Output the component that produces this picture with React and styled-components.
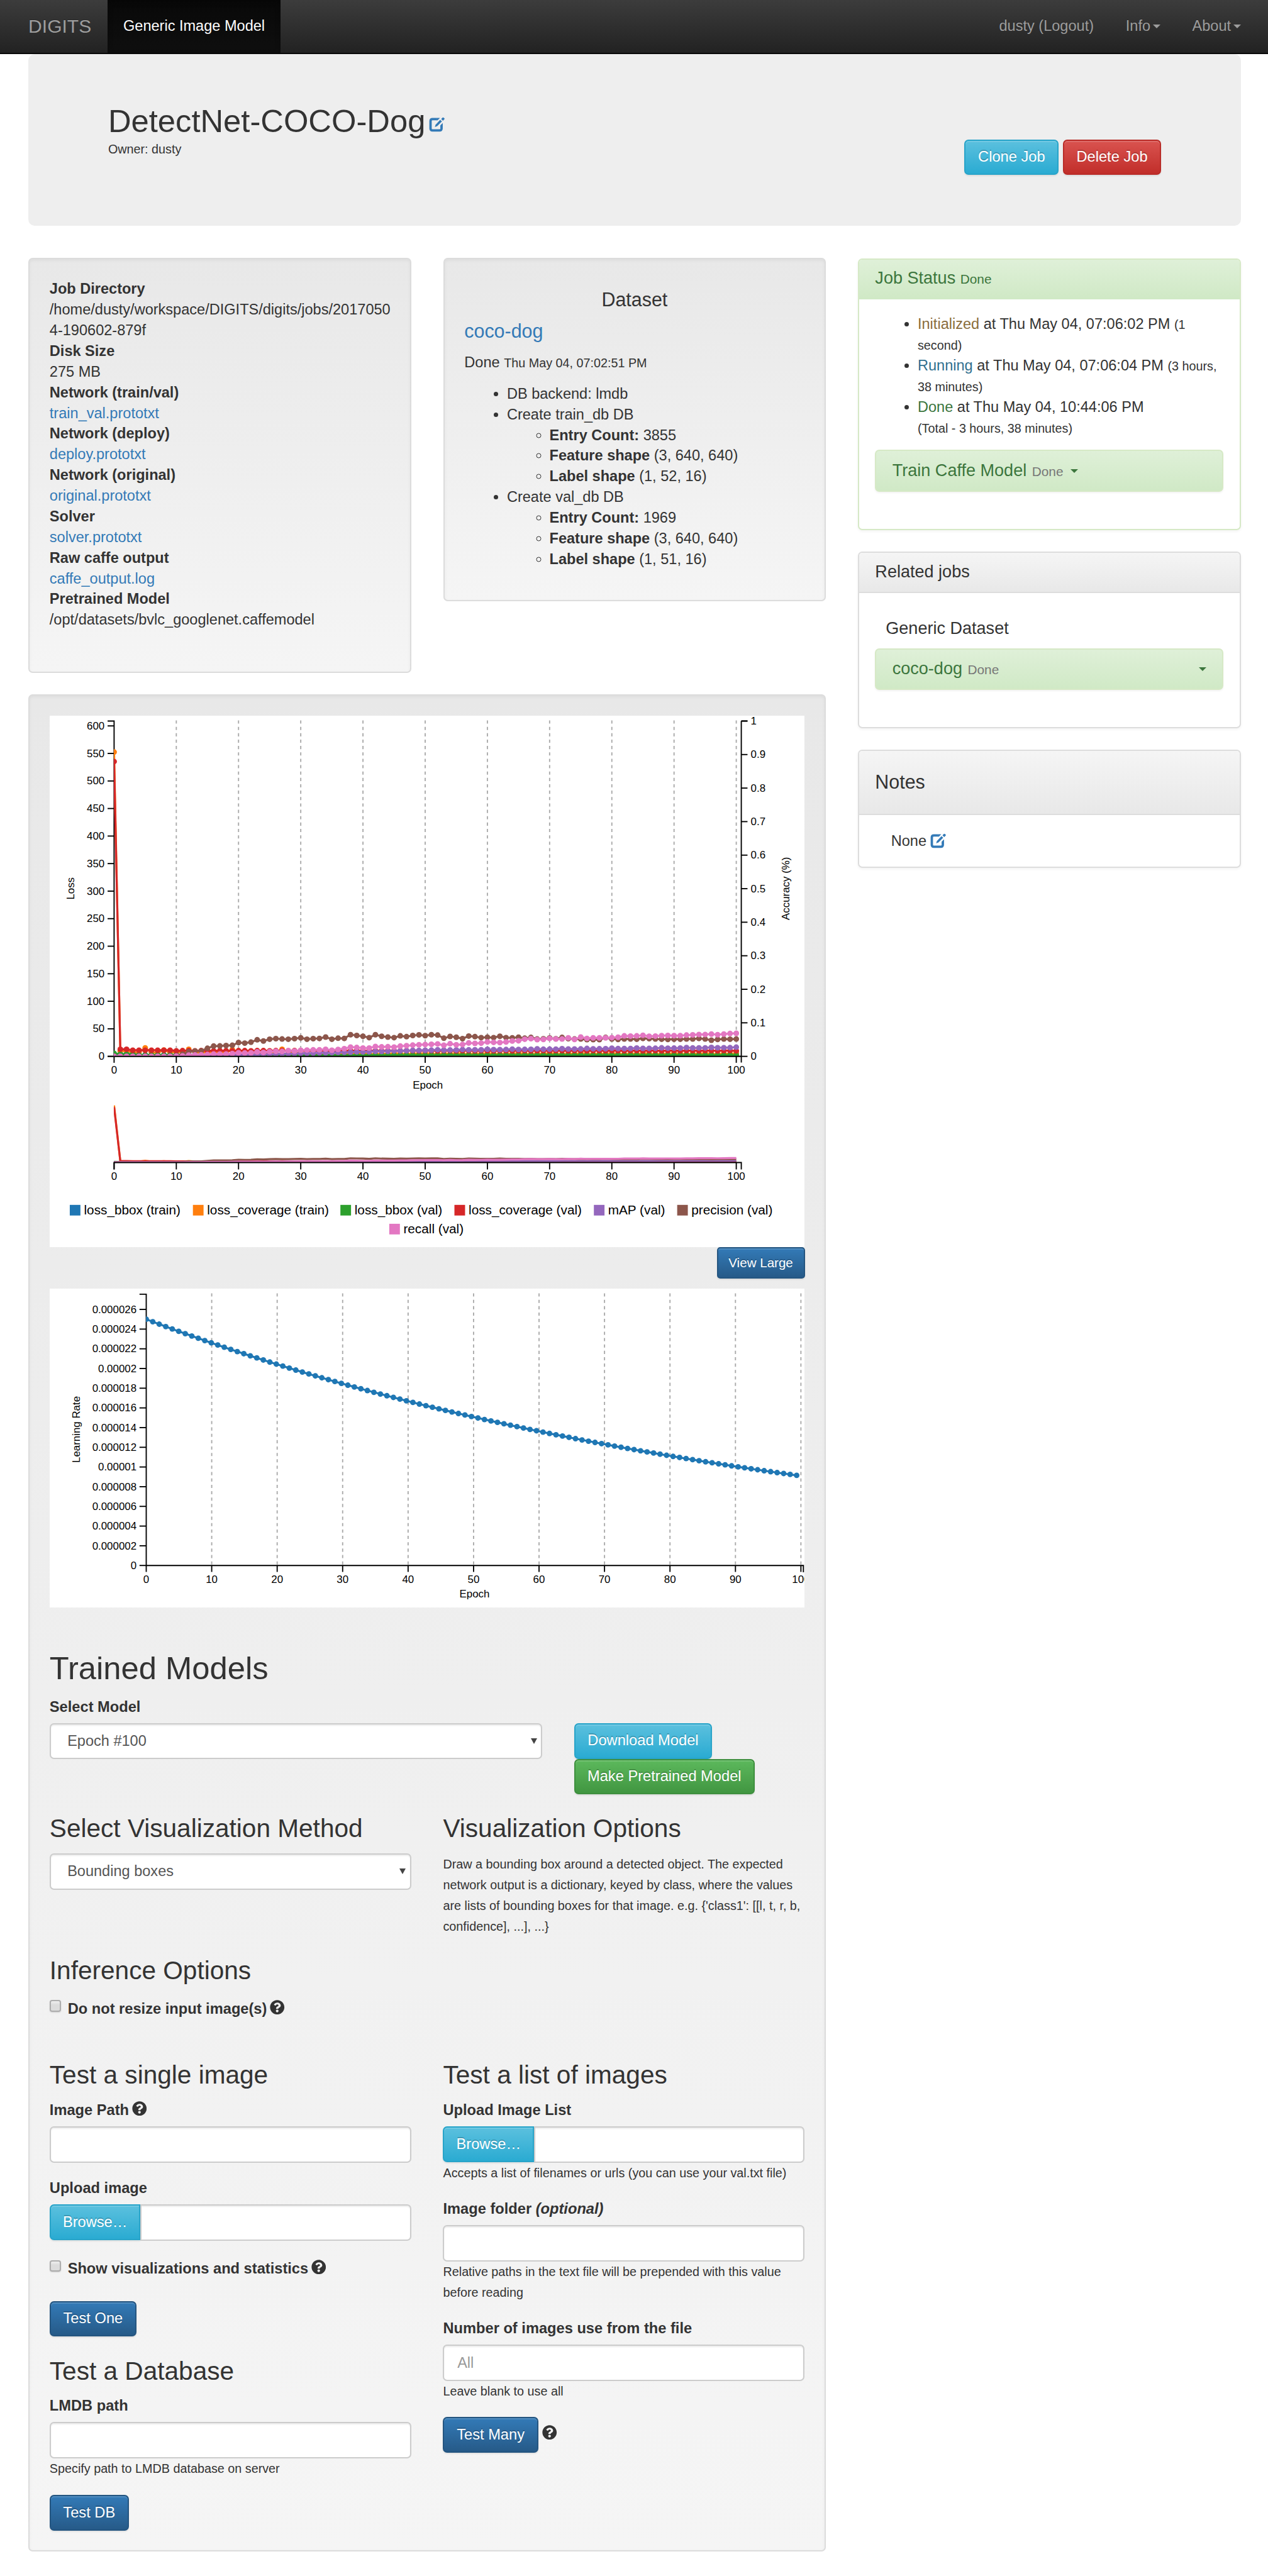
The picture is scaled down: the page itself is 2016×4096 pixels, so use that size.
import React from 'react';
import styled, { createGlobalStyle, css } from 'styled-components';
import { FaQuestionCircle } from 'react-icons/fa';

const GlobalStyle = createGlobalStyle`
  *, *::before, *::after { box-sizing: border-box; }
  html { font-size: 9.3942px; }
  body {
    margin: 0;
    background: #fff;
    color: #333;
    font-family: "Liberation Sans", Arial, sans-serif;
    font-size: 2.508rem;
    line-height: 3.5rem;
  }
  h1, h2, h3, h4, p, ul, label { margin: 0; padding: 0; font-weight: normal; }
  a { color: #337ab7; text-decoration: none; }
  b { font-weight: bold; }
`;

/* ---------- navigation ---------- */

const Navbar = styled.nav`
  display: flex;
  height: 9.2rem;
  padding: 0 4.6rem 0 4.8rem;
  border-bottom: 2px solid #080808;
  background: linear-gradient(to bottom, #3c3c3c 0%, #222 100%);
  color: #9d9d9d;
  line-height: 8.9rem;
  text-shadow: 0 -1px 0 rgba(0, 0, 0, 0.25);
  white-space: nowrap;
`;

const Brand = styled.div`
  padding-right: 2.7rem;
  font-size: 3.2rem;
`;

const ActiveTab = styled.div`
  padding: 0 2.7rem;
  color: #fff;
  background: linear-gradient(to bottom, #080808 0%, #0f0f0f 100%);
  box-shadow: inset 0 3px 9px rgba(0, 0, 0, 0.25);
`;

const NavRight = styled.div`
  display: flex;
  gap: 5.4rem;
  margin-left: auto;
`;

const NavItem = styled.div`
  display: flex;
  align-items: center;
  gap: 0.4rem;
`;

const Caret = styled.span`
  display: inline-block;
  width: 0;
  height: 0;
  vertical-align: middle;
  border-top: 0.74rem solid currentColor;
  border-left: 0.74rem solid transparent;
  border-right: 0.74rem solid transparent;
`;

/* ---------- page frame ---------- */

const Container = styled.div`
  padding: 0 4.6rem 4.1rem 4.8rem;
`;

const Jumbotron = styled.header`
  display: flex;
  justify-content: space-between;
  height: 29rem;
  padding: 8.35rem 13.5rem 0;
  border-radius: 1.08rem;
  background: #eee;
`;

const JobTitle = styled.h2`
  font-size: 5.4rem;
  line-height: 5.9rem;
`;

const Small = styled.small`
  font-size: ${(p) => p.$size || '2.105rem'};
  line-height: 1;
  color: ${(p) => p.$color || 'inherit'};
`;

const Owner = styled.div`
  margin-top: 0.1rem;
  font-size: 2.105rem;
`;

const ButtonGroup = styled.div`
  display: flex;
  gap: 0.7rem;
  margin-top: 6.04rem;
`;

const tones = {
  info: css`background: linear-gradient(to bottom, #5bc0de 0%, #2aabd2 100%); border-color: #28a4c9;`,
  danger: css`background: linear-gradient(to bottom, #d9534f 0%, #c12e2a 100%); border-color: #b92c28;`,
  success: css`background: linear-gradient(to bottom, #5cb85c 0%, #419641 100%); border-color: #3e8f3e;`,
  primary: css`background: linear-gradient(to bottom, #337ab7 0%, #265a88 100%); border-color: #245580;`,
};

const Button = styled.button`
  display: inline-flex;
  align-items: center;
  justify-content: center;
  flex: none;
  width: ${(p) => p.$w};
  height: ${(p) => p.$h || '6.03rem'};
  margin: ${(p) => p.$m || 0};
  padding: 0;
  border: 2px solid;
  border-radius: ${(p) => p.$radius || '0.72rem'};
  color: #fff;
  font: inherit;
  font-size: ${(p) => p.$size || '2.52rem'};
  line-height: 1;
  white-space: nowrap;
  text-shadow: 0 -2px 0 rgba(0, 0, 0, 0.2);
  box-shadow: inset 0 2px 0 rgba(255, 255, 255, 0.15), 0 2px 2px rgba(0, 0, 0, 0.075);
  ${(p) => tones[p.$tone]}
`;

const Columns = styled.div`
  display: grid;
  grid-template-columns: 135rem 64.8rem;
  gap: 5.4rem;
  align-items: start;
  margin-top: 5.4rem;
`;

const TwoColumns = styled.div`
  display: grid;
  grid-template-columns: ${(p) => p.$cols || '64.8rem 64.8rem'};
  gap: 5.4rem;
  align-items: start;
  margin-top: ${(p) => p.$mt || 0};
`;

const Well = styled.section`
  height: ${(p) => p.$h};
  margin-top: ${(p) => p.$mt || 0};
  padding: ${(p) => p.$pt} 3.38rem 0;
  border: 2px solid #dcdcdc;
  border-radius: 0.72rem;
  background: linear-gradient(to bottom, #e8e8e8 0%, #f5f5f5 100%);
  box-shadow: inset 0 2px 5px rgba(0, 0, 0, 0.05), 0 2px 0 rgba(255, 255, 255, 0.1);
  white-space: nowrap;
`;

const DatasetTitle = styled.h4`
  margin-bottom: 1.8rem;
  font-size: 3.24rem;
  text-align: ${(p) => (p.$center ? 'center' : 'left')};
`;

const BulletList = styled.ul`
  padding-left: 7.2rem;
  margin-top: ${(p) => p.$mt || 0};
`;

/* ---------- sidebar ---------- */

const Sidebar = styled.aside`
  display: flex;
  flex-direction: column;
  gap: 3.67rem;
  padding-top: 0.1rem;
`;

const Panel = styled.section`
  height: ${(p) => p.$h};
  border: 2px solid ${(p) => (p.$green ? '#d6e9c6' : '#ddd')};
  border-radius: 0.72rem;
  overflow: hidden;
  box-shadow: 0 2px 4px rgba(0, 0, 0, 0.05);
`;

const PanelHeading = styled.div`
  height: ${(p) => p.$h};
  padding: ${(p) => p.$pt} 2.7rem 0;
  font-size: ${(p) => p.$size || '2.88rem'};
  line-height: ${(p) => p.$lh || '3.1rem'};
  color: ${(p) => (p.$green ? '#3c763d' : '#333')};
  border-bottom: 2px solid ${(p) => (p.$green ? '#d0e9c6' : '#ddd')};
  background: ${(p) =>
    p.$green
      ? 'linear-gradient(to bottom, #dff0d8 0%, #d0e9c6 100%)'
      : 'linear-gradient(to bottom, #f5f5f5 0%, #e8e8e8 100%)'};
`;

const PanelBody = styled.div`
  padding: ${(p) => p.$pt} 2.7rem 0;
`;

const Status = styled.span`
  color: ${(p) => p.$color};
`;

const JobBar = styled.div`
  display: flex;
  align-items: baseline;
  gap: 0.9rem;
  height: 7.1rem;
  margin-top: ${(p) => p.$mt};
  padding: 1.55rem 2.7rem 0;
  border: 2px solid #d6e9c6;
  border-radius: 0.72rem;
  background: linear-gradient(to bottom, #dff0d8 0%, #d0e9c6 100%);
  box-shadow: 0 2px 3px rgba(0, 0, 0, 0.05);
  color: #3c763d;
  font-size: 2.88rem;
  white-space: nowrap;

  ${Caret} {
    align-self: flex-start;
    margin-top: 1.5rem;
    margin-left: ${(p) => (p.$spread ? 'auto' : '0.3rem')};
  }
`;

const DatasetKind = styled.h4`
  padding-left: 1.8rem;
  font-size: 2.88rem;
  line-height: 3.1rem;
`;

const NoteLine = styled.div`
  display: flex;
  align-items: center;
  gap: 0.6rem;
  padding-left: 2.7rem;
`;

/* ---------- charts ---------- */

const ChartSvg = styled.svg`
  display: block;
  width: 127.8rem;
  height: ${(p) => p.$h};
  margin-top: ${(p) => p.$mt || 0};
  background: #fff;
  overflow: hidden;
  font-family: "Liberation Sans", Arial, sans-serif;
  font-size: 18px;

  .axis { fill: none; stroke: #000; stroke-width: 2; }
  .grid { stroke: #aaa; stroke-width: 2; stroke-dasharray: 5.4 5.4; }
  .line { fill: none; stroke-width: 3.4; }
  .end { text-anchor: end; }
  .mid { text-anchor: middle; }
`;

const ChartActions = styled.div`
  display: flex;
  justify-content: flex-end;
`;

/* ---------- forms ---------- */

const Heading = styled.h3`
  margin-top: ${(p) => p.$mt};
  font-size: ${(p) => (p.$large ? '5.4rem' : '4.32rem')};
  line-height: ${(p) => (p.$large ? '5.9rem' : '4.7rem')};
`;

const Label = styled.label`
  display: flex;
  gap: 0.8rem;
  margin-top: ${(p) => p.$mt};
  margin-bottom: 1rem;
  font-size: 2.52rem;
  font-weight: bold;

  svg { width: 2.5rem; height: 2.5rem; margin: 0.24rem 0 0 -0.3rem; }
`;

const CheckLabel = styled(Label)`
  margin-bottom: 0;
`;

const Checkbox = styled.input.attrs({ type: 'checkbox' })`
  appearance: none;
  width: 1.97rem;
  height: 1.97rem;
  margin: 0.3rem 0.3rem 0 0;
  border: 2px solid #adadad;
  border-radius: 0.4rem;
  background: linear-gradient(to bottom, #efefef, #dcdcdc 40%);
  box-shadow: 0 1px 2px rgba(0, 0, 0, 0.15);
`;

const field = css`
  height: 6.12rem;
  border: 2px solid #ccc;
  border-radius: 0.72rem;
  background: #fff;
  box-shadow: inset 0 2px 2px rgba(0, 0, 0, 0.075);
`;

const Input = styled.input`
  ${field}
  display: block;
  width: 100%;
  padding: 0 2.2rem;
  font: inherit;
  color: #555;
  &::placeholder { color: #999; opacity: 1; }
`;

const SelectBox = styled.div`
  ${field}
  display: flex;
  align-items: center;
  justify-content: space-between;
  width: ${(p) => p.$w || '100%'};
  margin-top: ${(p) => p.$mt || 0};
  padding: 0 0.7rem 0 2.8rem;
  color: #555;
`;

const SelectArrow = styled.span`
  border-top: 1.05rem solid #444;
  border-left: 0.55rem solid transparent;
  border-right: 0.55rem solid transparent;
`;

const FileField = styled.div`
  display: flex;

  ${Input} {
    flex: 1;
    width: auto;
    min-width: 0;
    border-top-left-radius: 0;
    border-bottom-left-radius: 0;
  }
`;

const Help = styled.p`
  margin-top: ${(p) => p.$mt || 0};
  font-size: 2.105rem;
`;

const ModelRow = styled.div`
  display: flex;
  gap: 5.4rem;
`;

const ButtonStack = styled.div`
  display: flex;
  flex-direction: column;
`;

const SubmitRow = styled.div`
  display: flex;
  gap: 0.7rem;
  margin-top: ${(p) => p.$mt};

  svg { width: 2.5rem; height: 2.5rem; margin-top: 1.4rem; }
`;

const EditSvg = styled.svg`
  width: 2.7rem;
  height: 2.5rem;
  margin-left: ${(p) => p.$ml || 0};
`;

function EditIcon({ ml }) {
  return (
    <EditSvg $ml={ml} viewBox="110 91 81 75" fill="none" stroke="#337ab7" aria-hidden="true">
      <path d="M151 102H128Q118 102 118 112V149Q118 159 128 159H164Q174 159 174 149V137" strokeWidth="12" />
      <path d="M151 96H166L154 108H149ZM180 121V139L168 145V133Z" fill="#337ab7" stroke="none" />
      <path d="M140 142L144 130L167 105L176 113L152 137Z" fill="#337ab7" stroke="none" />
      <path d="M172 101L179 94Q181 92 184 94L189 98Q190 101 188 103L181 110Z" fill="#337ab7" stroke="none" />
    </EditSvg>
  );
}

/* ---------- chart data (heights above the axis, in thirds of a chart unit) ---------- */

const precision = [
  0, 0, 0, 0, 0, 0, 0, 0, 0, 0, 4, 11, 23, 27, 28, 41, 52, 53, 55, 56, 70, 67, 72, 84, 78, 87, 90, 88, 87, 90, 94, 87, 90, 91,
  98, 87, 92, 91, 110, 106, 102, 95, 110, 102, 98, 95, 104, 100, 106, 109, 105, 110, 108, 92, 101, 97, 90, 103, 100, 95, 97,
  95, 102, 95, 94, 97, 92, 96, 88, 89, 93, 89, 96, 90, 88, 88, 85, 85, 85, 96, 88, 86, 88, 88, 87, 91, 90, 88, 87, 86, 87, 87,
  88, 88, 91, 88, 82, 86, 88, 87, 88,
];
const recall = [
  0, 0, 0, 0, 0, 0, 0, 0, 0, 0, 1, 2, 6, 7, 8, 9, 12, 12, 12, 14, 18, 17, 18, 23, 20, 24, 26, 25, 29, 27, 31, 32, 33, 33, 36,
  31, 35, 39, 47, 45, 42, 42, 50, 48, 49, 47, 52, 54, 57, 59, 60, 61, 63, 56, 64, 59, 60, 68, 66, 67, 73, 71, 70, 73, 78, 79,
  87, 90, 85, 86, 91, 88, 88, 94, 86, 98, 91, 94, 94, 94, 95, 97, 104, 103, 104, 107, 102, 103, 105, 106, 105, 105, 108, 109,
  111, 111, 113, 110, 113, 116, 117,
];
const epochs = precision.map((_, i) => i);
const map = epochs.map((i) => {
  if (i < 12) return 0;
  if (i < 50) return (i - 12) * 0.82 + (i % 3 ? 0 : 1);
  return 31 + (i - 50) * 0.27 + (i % 4 ? 0 : 2);
});
const covVal = epochs.map((i) => (i === 0 ? 1497 : i < 3 ? 36 : i < 10 ? 31 : 29 - (i % 3 === 1 ? 1 : 0)));
const orangePeaks = { 5: 43, 8: 32, 12: 36, 19: 34, 27: 36, 35: 26 };
const covTrain = epochs.map((i) =>
  i === 0 ? 1545 : i < 3 ? 27 : orangePeaks[i] || (i < 30 ? 22 : 15) - ((i * 7) % 5)
);
const bboxVal = epochs.map((i) => (i === 0 ? 15 : i < 4 ? 10 : 6));
const bboxTrain = epochs.map((i) => (i < 4 ? 12 : 7));

const series = [
  { name: 'loss_bbox (train)', color: '#1f77b4', data: bboxTrain, lx: 118 },
  { name: 'loss_coverage (train)', color: '#ff7f0e', data: covTrain, lx: 326.4 },
  { name: 'loss_bbox (val)', color: '#2ca02c', data: bboxVal, lx: 576 },
  { name: 'loss_coverage (val)', color: '#d62728', data: covVal, lx: 769 },
  { name: 'mAP (val)', color: '#9467bd', data: map, lx: 1005 },
  { name: 'precision (val)', color: '#8c564b', data: precision, lx: 1146 },
  { name: 'recall (val)', color: '#e377c2', data: recall, lx: 658.7, row: 1 },
];

const tens = [0, 10, 20, 30, 40, 50, 60, 70, 80, 90, 100];

function LossChart() {
  const x = (e) => 193 + e * 10.53;
  const bottom = 1787.6;
  const losses = Array.from({ length: 13 }, (_, i) => i * 50);
  return (
    <ChartSvg $h="90rem" viewBox="84 1211 1278 900">
      <clipPath id="plot"><rect x="192.5" y="1215" width="1063" height="573" /></clipPath>
      {tens.slice(1).map((t) => <line key={t} className="grid" x1={x(t)} x2={x(t)} y1="1219" y2={bottom} />)}
      <path className="axis" d={`M182 1220H193V${bottom}H182`} />
      <path className="axis" d={`M193 ${bottom}H1254.5M1254.5 1798V1220M1254.5 1220H1265`} />
      {losses.map((v) => {
        const y = bottom - v * 0.9322;
        return (
          <g key={v}>
            <line className="axis" x1="182" x2="193" y1={y} y2={y} />
            <text className="end" x="176.8" y={y + 6}>{v}</text>
          </g>
        );
      })}
      {tens.map((v) => {
        const y = bottom - v * 5.676;
        return (
          <g key={v}>
            <line className="axis" x1="1254.5" x2="1265" y1={y} y2={y} />
            <text x="1270.5" y={y + 6}>{v / 100}</text>
            <line className="axis" x1={x(v)} x2={x(v)} y1={bottom} y2="1798.5" />
            <text className="mid" x={x(v)} y="1817">{v}</text>
            <line className="axis" x1={x(v)} x2={x(v)} y1="1967.3" y2="1979" />
            <text className="mid" x={x(v)} y="1996.7">{v}</text>
          </g>
        );
      })}
      <text className="mid" x="724" y="1842">Epoch</text>
      <text className="mid" transform="translate(126 1503.5) rotate(-90)">Loss</text>
      <text className="mid" transform="translate(1336 1503.5) rotate(-90)">Accuracy (%)</text>
      <g clipPath="url(#plot)">
        {series.map((s) => (
          <g key={s.name}>
            <polyline
              className="line"
              stroke={s.color}
              points={s.data.map((d, i) => `${x(i)},${bottom - d / 3}`).join(' ')}
            />
            {s.data.map((d, i) => <circle key={i} cx={x(i)} cy={bottom - d / 3} r="4.8" fill={s.color} />)}
          </g>
        ))}
      </g>
      <line className="axis" x1="193" x2="1254.5" y1={bottom} y2={bottom} />
      <clipPath id="overview"><rect x="192.5" y="1860" width="1063" height="107.5" /></clipPath>
      <g clipPath="url(#overview)">
        {series.map((s) => (
          <polyline
            key={s.name}
            className="line"
            stroke={s.color}
            points={s.data.map((d, i) => `${x(i)},${1967 - (d / 3) * 0.187}`).join(' ')}
          />
        ))}
      </g>
      <path className="axis" d="M193 1979V1967.3H1254.5V1979" />
      {series.map((s) => (
        <g key={s.name} fontSize="22.1">
          <rect x={s.lx} y={s.row ? 2071 : 2039} width="18" height="18" fill={s.color} />
          <text x={s.lx + 24} y={s.row ? 2086.7 : 2054.7}>{s.name}</text>
        </g>
      ))}
    </ChartSvg>
  );
}

const rateLabels = [
  '0', '0.000002', '0.000004', '0.000006', '0.000008', '0.00001', '0.000012',
  '0.000014', '0.000016', '0.000018', '0.00002', '0.000022', '0.000024', '0.000026',
];

function RateChart() {
  const x = (e) => 247.4 + e * 11.08;
  const bottom = 2649.6;
  const points = epochs.map((i) => [x(i * 0.9935), bottom - 25 * Math.pow(0.99, i) * 16.67]);
  return (
    <ChartSvg $h="54rem" $mt="1.7rem" viewBox="84 2181 1278 540">
      <clipPath id="rate"><rect x="247" y="2185" width="1115" height="466" /></clipPath>
      {tens.slice(1).map((t) => <line key={t} className="grid" x1={x(t)} x2={x(t)} y1="2189" y2={bottom} />)}
      <path className="axis" d={`M236 2190.5H247.4V${bottom}H1359.6V2661`} />
      {rateLabels.map((l, i) => {
        const y = bottom - i * 33.34;
        return (
          <g key={l}>
            <line className="axis" x1="236" x2="247.4" y1={y} y2={y} />
            <text className="end" x="231" y={y + 6}>{l}</text>
          </g>
        );
      })}
      {tens.map((t) => (
        <g key={t}>
          <line className="axis" x1={x(t)} x2={x(t)} y1={bottom} y2="2660.5" />
          <text className="mid" x={x(t)} y="2679">{t}</text>
        </g>
      ))}
      <text className="mid" x="803" y="2704">Epoch</text>
      <text className="mid" transform="translate(134.6 2419.4) rotate(-90)">Learning Rate</text>
      <g clipPath="url(#rate)" fill="#1f77b4">
        <polyline className="line" stroke="#1f77b4" points={points.map((p) => p.join(',')).join(' ')} />
        {points.map(([cx, cy]) => <circle key={cx} cx={cx} cy={cy} r="4.7" />)}
      </g>
    </ChartSvg>
  );
}

const files = [
  ['Network (train/val)', 'train_val.prototxt'],
  ['Network (deploy)', 'deploy.prototxt'],
  ['Network (original)', 'original.prototxt'],
  ['Solver', 'solver.prototxt'],
  ['Raw caffe output', 'caffe_output.log'],
];

function DbDetails({ name, count, label }) {
  return (
    <li>
      Create {name} DB
      <BulletList>
        <li><b>Entry Count:</b> {count}</li>
        <li><b>Feature shape</b> (3, 640, 640)</li>
        <li><b>Label shape</b> {label}</li>
      </BulletList>
    </li>
  );
}

function FilePicker() {
  return (
    <FileField>
      <Button $tone="info" $w="15.4rem" $radius="0.72rem 0 0 0.72rem">Browse…</Button>
      <Input />
    </FileField>
  );
}

export default function App() {
  return (
    <>
      <GlobalStyle />
      <Navbar>
        <Brand>DIGITS</Brand>
        <ActiveTab>Generic Image Model</ActiveTab>
        <NavRight>
          <NavItem>dusty (Logout)</NavItem>
          <NavItem>Info<Caret /></NavItem>
          <NavItem>About<Caret /></NavItem>
        </NavRight>
      </Navbar>
      <Container>
        <Jumbotron>
          <div>
            <JobTitle>DetectNet-COCO-Dog<EditIcon ml="0.6rem" /></JobTitle>
            <Owner>Owner: dusty</Owner>
          </div>
          <ButtonGroup>
            <Button $tone="info" $w="16rem">Clone Job</Button>
            <Button $tone="danger" $w="16.6rem">Delete Job</Button>
          </ButtonGroup>
        </Jumbotron>

        <Columns>
          <main>
            <TwoColumns>
              <Well $h="70.3rem" $pt="3.38rem">
                <div><b>Job Directory</b></div>
                <div>/home/dusty/workspace/DIGITS/digits/jobs/2017050<br />4-190602-879f</div>
                <div><b>Disk Size</b></div>
                <div>275 MB</div>
                {files.map(([title, file]) => (
                  <div key={file}><b>{title}</b><br /><a>{file}</a></div>
                ))}
                <div><b>Pretrained Model</b></div>
                <div>/opt/datasets/bvlc_googlenet.caffemodel</div>
              </Well>
              <Well $h="58.2rem" $pt="5.15rem">
                <DatasetTitle $center>Dataset</DatasetTitle>
                <DatasetTitle><a>coco-dog</a></DatasetTitle>
                <div>Done <Small>Thu May 04, 07:02:51 PM</Small></div>
                <BulletList $mt="1.85rem">
                  <li>DB backend: lmdb</li>
                  <DbDetails name="train_db" count="3855" label="(1, 52, 16)" />
                  <DbDetails name="val_db" count="1969" label="(1, 51, 16)" />
                </BulletList>
              </Well>
            </TwoColumns>

            <Well $h="314.4rem" $mt="3.6rem" $pt="3.38rem">
              <LossChart />
              <ChartActions>
                <Button $tone="primary" $w="14.9rem" $h="5.3rem" $size="2.19rem" $radius="0.54rem">View Large</Button>
              </ChartActions>
              <RateChart />

              <Heading $large $mt="7.38rem">Trained Models</Heading>
              <Label $mt="1.8rem">Select Model</Label>
              <ModelRow>
                <SelectBox $w="83.4rem">Epoch #100<SelectArrow /></SelectBox>
                <ButtonStack>
                  <Button $tone="info" $w="23.3rem">Download Model</Button>
                  <Button $tone="success" $w="30.5rem">Make Pretrained Model</Button>
                </ButtonStack>
              </ModelRow>

              <TwoColumns $cols="61.2rem 61.2rem" $mt="3.4rem">
                <div>
                  <Heading>Select Visualization Method</Heading>
                  <SelectBox $mt="1.9rem">Bounding boxes<SelectArrow /></SelectBox>
                </div>
                <div>
                  <Heading>Visualization Options</Heading>
                  <Help $mt="2.03rem">
                    Draw a bounding box around a detected object. The expected<br />
                    network output is a dictionary, keyed by class, where the values<br />
                    are lists of bounding boxes for that image. e.g. {"{'class1': [[l, t, r, b,"}<br />
                    {'confidence], ...], ...}'}
                  </Help>
                </div>
              </TwoColumns>

              <Heading $mt="3.35rem">Inference Options</Heading>
              <CheckLabel $mt="2.36rem"><Checkbox />Do not resize input image(s)<FaQuestionCircle /></CheckLabel>

              <TwoColumns $cols="61.2rem 61.2rem" $mt="7.12rem">
                <div>
                  <Heading>Test a single image</Heading>
                  <Label $mt="1.86rem">Image Path<FaQuestionCircle /></Label>
                  <Input />
                  <Label $mt="2.55rem">Upload image</Label>
                  <FilePicker />
                  <CheckLabel $mt="3.05rem"><Checkbox />Show visualizations and statistics<FaQuestionCircle /></CheckLabel>
                  <Button $tone="primary" $w="14.7rem" $m="3.69rem 0 0">Test One</Button>
                  <Heading $mt="3.5rem">Test a Database</Heading>
                  <Label $mt="1.78rem">LMDB path</Label>
                  <Input />
                  <Help>Specify path to LMDB database on server</Help>
                  <Button $tone="primary" $w="13.4rem" $m="2.7rem 0 0">Test DB</Button>
                </div>
                <div>
                  <Heading>Test a list of images</Heading>
                  <Label $mt="1.86rem">Upload Image List</Label>
                  <FilePicker />
                  <Help>Accepts a list of filenames or urls (you can use your val.txt file)</Help>
                  <Label $mt="2.6rem"><span>Image folder <i>(optional)</i></span></Label>
                  <Input />
                  <Help>
                    Relative paths in the text file will be prepended with this value<br />
                    before reading
                  </Help>
                  <Label $mt="2.6rem">Number of images use from the file</Label>
                  <Input placeholder="All" />
                  <Help>Leave blank to use all</Help>
                  <SubmitRow $mt="2.6rem">
                    <Button $tone="primary" $w="16.1rem">Test Many</Button>
                    <FaQuestionCircle />
                  </SubmitRow>
                </div>
              </TwoColumns>
            </Well>
          </main>

          <Sidebar>
            <Panel $green $h="46rem">
              <PanelHeading $green $h="6.8rem" $pt="1.6rem">Job Status <Small $size="2.22rem">Done</Small></PanelHeading>
              <PanelBody $pt="2.45rem">
                <BulletList>
                  <li><Status $color="#8a6d3b">Initialized</Status> at Thu May 04, 07:06:02 PM <Small>(1<br />second)</Small></li>
                  <li><Status $color="#31708f">Running</Status> at Thu May 04, 07:06:04 PM <Small>(3 hours,<br />38 minutes)</Small></li>
                  <li><Status $color="#3c763d">Done</Status> at Thu May 04, 10:44:06 PM<br /><Small>(Total - 3 hours, 38 minutes)</Small></li>
                </BulletList>
                <JobBar $mt="1.95rem">
                  Train Caffe Model<Small $size="2.22rem" $color="#777">Done</Small><Caret />
                </JobBar>
              </PanelBody>
            </Panel>
            <Panel $h="29.9rem">
              <PanelHeading $h="6.8rem" $pt="1.7rem">Related jobs</PanelHeading>
              <PanelBody $pt="4.5rem">
                <DatasetKind>Generic Dataset</DatasetKind>
                <JobBar $mt="1.75rem" $spread>
                  coco-dog<Small $size="2.22rem" $color="#777">Done</Small><Caret />
                </JobBar>
              </PanelBody>
            </Panel>
            <Panel $h="20rem">
              <PanelHeading $h="10.85rem" $pt="3.45rem" $size="3.24rem" $lh="3.5rem">Notes</PanelHeading>
              <PanelBody $pt="2.6rem">
                <NoteLine>None<EditIcon /></NoteLine>
              </PanelBody>
            </Panel>
          </Sidebar>
        </Columns>
      </Container>
    </>
  );
}
